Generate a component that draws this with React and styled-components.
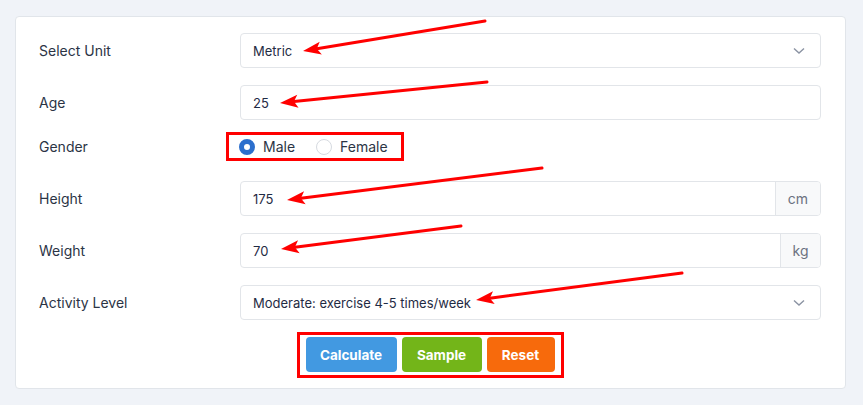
import React from "react";
import styled, { createGlobalStyle } from "styled-components";

const Global = createGlobalStyle`
  html, body { margin: 0; padding: 0; background: #f0f3f8; }
  body { font-family: Inter, "Liberation Sans", sans-serif; }
  * { box-sizing: border-box; }
`;

const Page = styled.div`
  position: relative;
  width: 863px;
  height: 405px;
  padding: 16px 17px 16px 15px;
`;

const Card = styled.div`
  background: #fff;
  border: 1px solid #e1e5ea;
  border-radius: 4px;
  padding: 16px 24px 16px 23px;
  display: flex;
  flex-direction: column;
  gap: 17px;
`;

const Row = styled.div`
  display: grid;
  grid-template-columns: 201px 1fr;
  align-items: center;
  justify-items: ${(p) => (p.$short ? "start" : "stretch")};
  min-height: ${(p) => (p.$short ? "27px" : "35px")};
  margin: ${(p) => (p.$short ? "-4px 0 4px" : "0")};
`;

const Label = styled.div`
  font-size: 14px;
  color: #2b3445;
  justify-self: start;
`;

const Field = styled.div`
  position: relative;
  display: flex;
  width: 100%;
  height: 35px;
  border: 1px solid #e2e5e9;
  border-radius: 4px;
  background: #fff;
  overflow: hidden;
`;

const Input = styled.input`
  flex: 1;
  border: 0;
  outline: none;
  padding: 0 12px;
  font: inherit;
  font-size: 13px;
  color: #1f2b44;
  background: transparent;
  min-width: 0;
`;

const Select = styled.select`
  flex: 1;
  appearance: none;
  -webkit-appearance: none;
  border: 0;
  outline: none;
  padding: 0 12px;
  font: inherit;
  font-size: 13px;
  color: #1f2b44;
  background: transparent;
`;

const Chevron = styled.svg`
  position: absolute;
  right: 15px;
  top: 13px;
  pointer-events: none;
`;

const Addon = styled.div`
  display: flex;
  align-items: center;
  justify-content: center;
  width: ${(p) => p.$w}px;
  border-left: 1px solid #e2e5e9;
  background: #f8f9fa;
  color: #6b7280;
  font-size: 14px;
`;

const Annotated = styled.div`
  position: relative;
  display: flex;
  align-items: center;
  align-self: stretch;
  gap: ${(p) => p.$gap}px;
  margin-left: ${(p) => p.$shift || 0}px;
  &::after {
    content: "";
    position: absolute;
    inset: ${(p) => p.$inset};
    border: 3px solid #f00;
    pointer-events: none;
  }
`;

const RadioItem = styled.label`
  display: flex;
  align-items: center;
  gap: 8px;
  font-size: 14px;
  color: #2b3445;
  cursor: pointer;
`;

const RadioDot = styled.span`
  flex-shrink: 0;
  width: 16px;
  height: 16px;
  border-radius: 50%;
  border: ${(p) => (p.$on ? "5px solid #2c6fcd" : "1px solid #d6dae0")};
  background: #fff;
`;

const Buttons = styled.div`
  display: flex;
  justify-content: center;
`;

const Button = styled.button`
  height: 35px;
  width: ${(p) => p.$w}px;
  border: 0;
  border-radius: 4px;
  background: ${(p) => p.$bg};
  color: #fff;
  font: inherit;
  font-weight: 700;
  font-size: 13.5px;
  cursor: pointer;
`;

const Arrows = styled.svg`
  position: absolute;
  left: 0;
  top: 0;
  pointer-events: none;
`;

function Arrow({ t, p }) {
  const dx = p[0] - t[0];
  const dy = p[1] - t[1];
  const len = Math.hypot(dx, dy);
  const ux = dx / len;
  const uy = dy / len;
  const hl = 18;
  const hw = 6.5;
  const bx = p[0] - ux * hl;
  const by = p[1] - uy * hl;
  const nx = -uy;
  const ny = ux;
  const pts = `${p[0]},${p[1]} ${bx + nx * hw},${by + ny * hw} ${bx + ux * 4},${by + uy * 4} ${bx - nx * hw},${by - ny * hw}`;
  return (
    <g>
      <line x1={t[0]} y1={t[1]} x2={bx + ux * 4} y2={by + uy * 4} stroke="#f00" strokeWidth="3" strokeLinecap="round" />
      <polygon points={pts} fill="#f00" />
    </g>
  );
}

const chevron = (
  <Chevron width="12" height="8" viewBox="0 0 12 8">
    <path d="M1 1.5 L6 6 L11 1.5" fill="none" stroke="#8b93a3" strokeWidth="1.4" />
  </Chevron>
);

export default function App() {
  return (
    <>
      <Global />
      <Page>
        <Card>
          <Row>
            <Label>Select Unit</Label>
            <Field>
              <Select defaultValue="metric">
                <option value="metric">Metric</option>
                <option value="imperial">Imperial</option>
              </Select>
              {chevron}
            </Field>
          </Row>
          <Row>
            <Label>Age</Label>
            <Field>
              <Input defaultValue="25" />
            </Field>
          </Row>
          <Row $short>
            <Label>Gender</Label>
            <Annotated $gap={21} $shift={-1} $inset="-1px -16px -1px -13px">
              <RadioItem>
                <RadioDot $on />
                Male
              </RadioItem>
              <RadioItem>
                <RadioDot />
                Female
              </RadioItem>
            </Annotated>
          </Row>
          <Row>
            <Label>Height</Label>
            <Field>
              <Input defaultValue="175" />
              <Addon $w={45}>cm</Addon>
            </Field>
          </Row>
          <Row>
            <Label>Weight</Label>
            <Field>
              <Input defaultValue="70" />
              <Addon $w={40}>kg</Addon>
            </Field>
          </Row>
          <Row>
            <Label>Activity Level</Label>
            <Field>
              <Select defaultValue="moderate">
                <option value="moderate">Moderate: exercise 4-5 times/week</option>
              </Select>
              {chevron}
            </Field>
          </Row>
          <Buttons>
            <Annotated $gap={5} $inset="-5px -9px -6px -9px">
              <Button $w={91} $bg="#4299e1">Calculate</Button>
              <Button $w={80} $bg="#73b519">Sample</Button>
              <Button $w={68} $bg="#f76a0c">Reset</Button>
            </Annotated>
          </Buttons>
        </Card>
        <Arrows width="863" height="405" viewBox="0 0 863 405">
          <Arrow t={[485, 21]} p={[303, 51]} />
          <Arrow t={[487, 82]} p={[280, 103]} />
          <Arrow t={[542, 168]} p={[287, 200]} />
          <Arrow t={[461, 226]} p={[281, 249]} />
          <Arrow t={[682, 273]} p={[476, 300]} />
        </Arrows>
      </Page>
    </>
  );
}
